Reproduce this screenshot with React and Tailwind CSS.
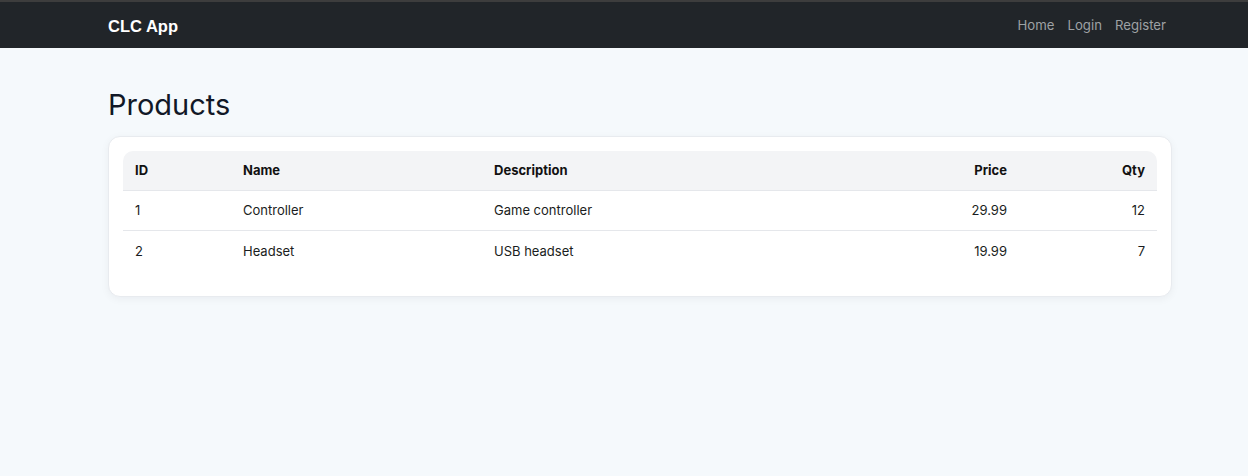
const products = [
  { id: 1, name: "Controller", description: "Game controller", price: "29.99", qty: 12 },
  { id: 2, name: "Headset", description: "USB headset", price: "19.99", qty: 7 },
];

export default function App() {
  return (
    <div className="min-h-screen bg-[#f5f9fc] font-['Inter',sans-serif] text-[#111827]">
      <div className="h-[2px] bg-[#3d3d3d]"></div>
      {/* Navbar */}
      <nav className="h-[46px] bg-[#212529] flex items-center justify-between pl-[108px] pr-[82px]">
        <a href="#" className="text-white font-bold text-[16.5px] pt-[2px] font-['Liberation_Sans',sans-serif]">CLC App</a>
        <div className="flex items-center gap-[13px] pt-[2px] text-[13.2px] text-[#9ea1a4]">
          <a href="#">Home</a>
          <a href="#">Login</a>
          <a href="#">Register</a>
        </div>
      </nav>

      <main className="pl-[108px] pr-[76px] pt-[39px]">
        <h1 className="text-[29px] leading-[36px] font-normal text-[#111827] mb-[13px]">Products</h1>

        <div className="bg-white rounded-[12px] border border-[#e8ebef] shadow-[0_2px_8px_rgba(15,23,42,0.05)] px-[14px] pt-[14px] pb-[26px]">
          <table className="w-full border-collapse text-[13px] table-fixed text-[#1a1d21]">
            <colgroup>
              <col className="w-[108px]" />
              <col className="w-[251px]" />
              <col />
              <col className="w-[138px]" />
              <col className="w-[138px]" />
            </colgroup>
            <thead>
              <tr className="bg-[#f3f4f6] text-[#111]">
                <th className="h-[39px] px-3 text-left font-bold rounded-tl-[10px]">ID</th>
                <th className="px-3 text-left font-bold">Name</th>
                <th className="px-3 text-left font-bold">Description</th>
                <th className="px-3 text-right font-bold">Price</th>
                <th className="px-3 text-right font-bold rounded-tr-[10px]">Qty</th>
              </tr>
            </thead>
            <tbody>
              {products.map((p) => (
                <tr key={p.id}>
                  <td className="h-[40px] px-3 pt-[2px] border-t border-[#e5e7eb]">{p.id}</td>
                  <td className="px-3 pt-[2px] border-t border-[#e5e7eb]">{p.name}</td>
                  <td className="px-3 pt-[2px] border-t border-[#e5e7eb]">{p.description}</td>
                  <td className="px-3 pt-[2px] text-right border-t border-[#e5e7eb]">{p.price}</td>
                  <td className="px-3 pt-[2px] text-right border-t border-[#e5e7eb]">{p.qty}</td>
                </tr>
              ))}
            </tbody>
          </table>
        </div>
      </main>
    </div>
  );
}
